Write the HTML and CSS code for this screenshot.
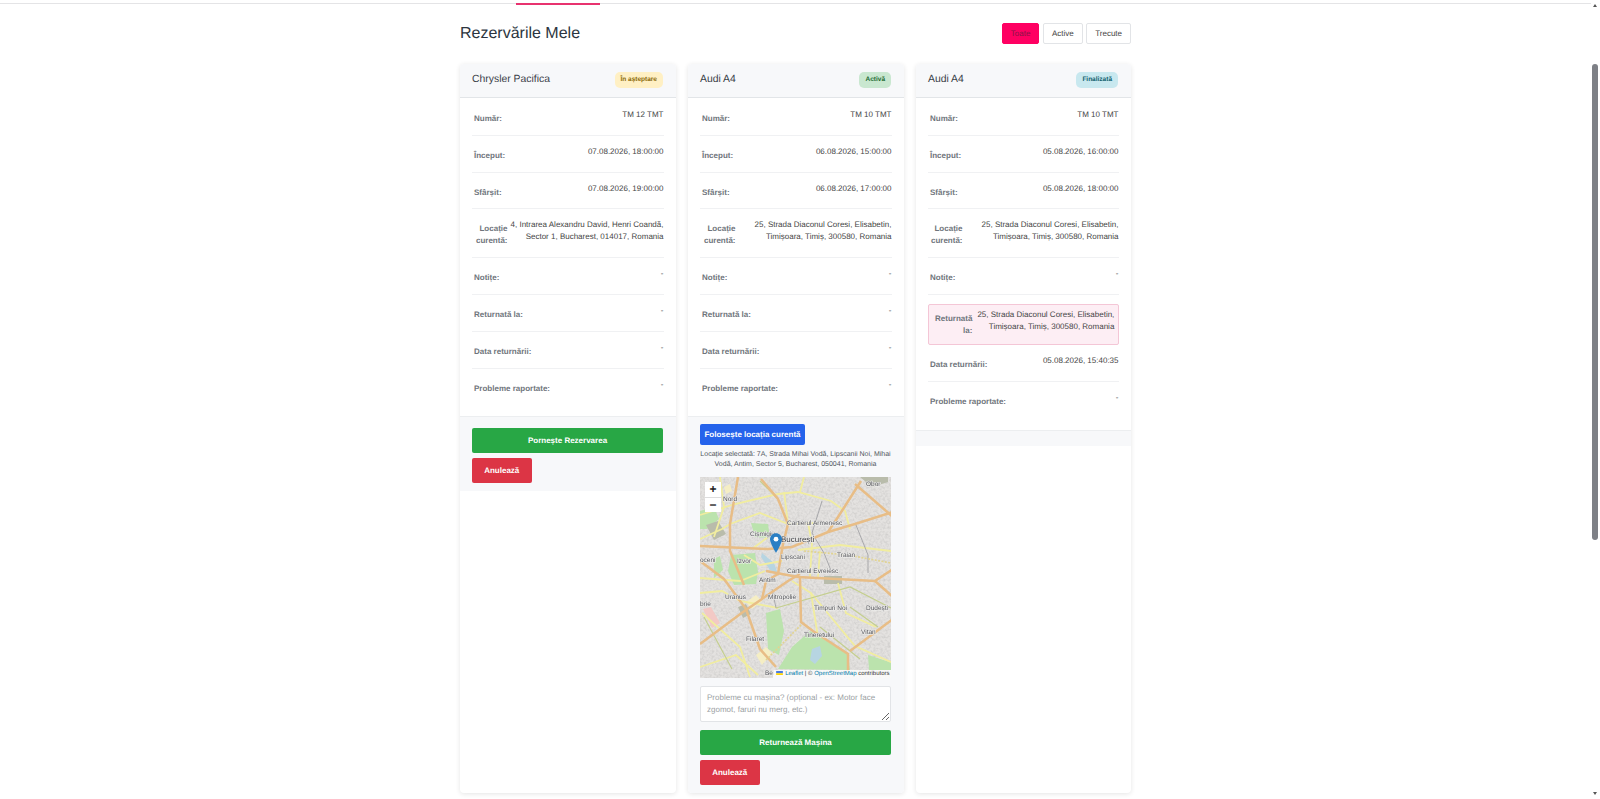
FILE: index.html
```html
<!DOCTYPE html>
<html lang="ro">
<head>
    <meta charset="UTF-8">
    <meta name="viewport" content="width=device-width, initial-scale=1.0">
    <title>Rezervările Mele</title>
    <link rel="stylesheet" href="styles.css">
</head>
<body>
    <div class="page">
        <main class="main">
            <!-- Bottom edge of the navbar, page is scrolled a little -->
            <div class="navbar-edge"><span class="nav-active"></span></div>

            <div class="wrap">
                <div class="top-row">
                    <h1 class="page-title">Rezervările Mele</h1>
                    <div class="filters">
                        <button class="filter filter-on">Toate</button>
                        <button class="filter">Active</button>
                        <button class="filter">Trecute</button>
                    </div>
                </div>

                <div class="cards">
                    <!-- Card 1 -->
                    <section class="card">
                        <div class="card-head">
                            <span class="car-name">Chrysler Pacifica</span>
                            <span class="badge badge-wait">În așteptare</span>
                        </div>
                        <div class="card-body">
                            <div class="row"><span class="label">Număr:</span><span class="val">TM 12 TMT</span></div>
                            <div class="row"><span class="label">Început:</span><span class="val">07.08.2026, 18:00:00</span></div>
                            <div class="row"><span class="label">Sfârșit:</span><span class="val">07.08.2026, 19:00:00</span></div>
                            <div class="row"><span class="label">Locație curentă:</span><span class="val">4, Intrarea Alexandru David, Henri Coandă, Sector 1, Bucharest, 014017, Romania</span></div>
                            <div class="row"><span class="label">Notițe:</span><span class="val">-</span></div>
                            <div class="row"><span class="label">Returnată la:</span><span class="val">-</span></div>
                            <div class="row"><span class="label">Data returnării:</span><span class="val">-</span></div>
                            <div class="row"><span class="label">Probleme raportate:</span><span class="val">-</span></div>
                        </div>
                        <div class="card-foot foot-wait">
                            <button class="btn btn-green">Pornește Rezervarea</button>
                            <button class="btn btn-red">Anulează</button>
                        </div>
                    </section>

                    <!-- Card 2 -->
                    <section class="card">
                        <div class="card-head">
                            <span class="car-name">Audi A4</span>
                            <span class="badge badge-active">Activă</span>
                        </div>
                        <div class="card-body">
                            <div class="row"><span class="label">Număr:</span><span class="val">TM 10 TMT</span></div>
                            <div class="row"><span class="label">Început:</span><span class="val">06.08.2026, 15:00:00</span></div>
                            <div class="row"><span class="label">Sfârșit:</span><span class="val">06.08.2026, 17:00:00</span></div>
                            <div class="row"><span class="label">Locație curentă:</span><span class="val">25, Strada Diaconul Coresi, Elisabetin, Timișoara, Timiș, 300580, Romania</span></div>
                            <div class="row"><span class="label">Notițe:</span><span class="val">-</span></div>
                            <div class="row"><span class="label">Returnată la:</span><span class="val">-</span></div>
                            <div class="row"><span class="label">Data returnării:</span><span class="val">-</span></div>
                            <div class="row"><span class="label">Probleme raportate:</span><span class="val">-</span></div>
                        </div>
                        <div class="card-foot foot-active">
                            <button class="btn btn-blue">Folosește locația curentă</button>
                            <p class="picked">Locație selectată: 7A, Strada Mihai Vodă, Lipscanii Noi, Mihai Vodă, Antim, Sector 5, Bucharest, 050041, Romania</p>

                            <div class="map">
                                <svg class="map-svg" viewBox="0 0 191 201" preserveAspectRatio="none">
                                    <defs>
                                        <filter id="mottle" x="0" y="0" width="100%" height="100%">
                                            <feTurbulence type="fractalNoise" baseFrequency=".42" numOctaves="2" seed="7"/>
                                            <feColorMatrix values="0 0 0 0 .62  0 0 0 0 .61  0 0 0 0 .6  1.9 0 0 0 -.72"/>
                                        </filter>
                                        <filter id="soft"><feGaussianBlur stdDeviation=".4"/></filter>
                                    </defs>
                                    <rect class="ground" width="191" height="201"/>
                                    <rect width="191" height="201" filter="url(#mottle)"/>
                                    <g filter="url(#soft)">
                                        <!-- parks and areas -->
                                        <path class="park" d="M51 46l17 1 2 14-15-1z"/>
                                        <path class="park" d="M31 78l24-2 3 19-2 12-22 1-6-14z"/>
                                        <path class="park" d="M66 136l14-4 4 22-5 24-11-6z"/>
                                        <path class="park" d="M78 192l14-22 18-16 20 12 18 10 2 17z"/>
                                        <path class="park" d="M168 178l25 8v7h-24z"/>
                                        <path class="park" d="M0 34l14-4 5 12-12 10H0z"/>
                                        <path class="park" d="M14 82l6-3 3 14-9 8z"/>
                                        <path class="water" d="M112 172l8-3 2 10-7 8-5-4z"/>
                                        <path class="water" d="M62 76l12 10 4 11-8-4-9-13z"/>
                                        <path class="pink" d="M3 132l8-2 9 16-8 5z"/>
                                        <path class="sand" d="M46 125l10-7 6 6-10 8z"/>
                                        <path class="sand" d="M56 178l10-8 6 6-10 12z"/>
                                        <path class="sand" d="M24 10l6-3 2 7-6 3z"/>
                                        <path class="dark" d="M6 48l12-4 8 13-12 6z"/>
                                        <path class="dark" d="M124 99h18v8h-18z"/>
                                        <path class="dark" d="M38 130l8-3 5 10-8 4z"/>
                                        <path class="dark" d="M160 0h28v5l-16 5z"/>
                                        <!-- yellow streets -->
                                        <path class="y" d="M0 38L35 27 78 17 98 15 131 24 145 34 150 52"/>
                                        <path class="y" d="M0 62L22 52 30 47 60 36 88 47"/>
                                        <path class="y" d="M84 15L88 47 118 46"/>
                                        <path class="y" d="M98 73L140 68 191 74"/>
                                        <path class="y" d="M0 101L40 104 65 94"/>
                                        <path class="y" d="M111 116L155 169 193 186"/>
                                        <path class="y" d="M92 104L111 116 118 160"/>
                                        <path class="y" d="M2 136L40 170 50 200"/>
                                        <path class="y" d="M44 78L60 88 82 84"/>
                                        <path class="y" d="M120 74L118 100"/>
                                        <path class="y" d="M0 116L22 114 40 124 78 131"/>
                                        <path class="y" d="M20 0L24 30 14 60"/>
                                        <path class="y" d="M100 15L104 0"/>
                                        <path class="y" d="M108 46L112 66 110 100"/>
                                        <path class="y" d="M138 106L146 136 176 150"/>
                                        <path class="y" d="M68 60L52 72"/>
                                        <path class="y" d="M0 190L36 178 58 198"/>
                                        <path class="g" d="M76 131L150 110 191 131"/>
                                        <path class="g" d="M120 150L160 182"/>
                                        <path class="g" d="M60 4L78 22"/>
                                        <path class="g" d="M150 130L178 150"/>
                                        <path class="g" d="M4 140L32 192"/>
                                        <path class="gr" d="M122 24L112 56 124 76 132 96"/>
                                        <path class="gr" d="M156 48L168 78 168 96"/>
                                        <path class="gr" d="M76 131L72 112"/>
                                        <!-- orange main roads -->
                                        <path class="o" d="M0 69L68 72 92 70 128 55 155 47 193 35"/>
                                        <path class="o" d="M38 0L30 47 30 74 44 108"/>
                                        <path class="o" d="M61 2L78 22 88 47 83 67 78 97 66 104 62 122"/>
                                        <path class="o" d="M161 4L138 40 128 55"/>
                                        <path class="o" d="M155 7L193 40"/>
                                        <path class="o" d="M66 94L98 100 175 104 193 92"/>
                                        <path class="o" d="M0 167L43 135 88 104 100 97"/>
                                        <path class="o" d="M100 100L101 145 113 154 148 177 148 195"/>
                                        <path class="o" d="M150 174L193 142"/>
                                        <path class="o" d="M0 84L24 102 46 132 60 172 76 190"/>
                                        <path class="o" d="M175 104L193 120"/>
                                        <path class="d" d="M101 148L66 183"/>
                                        <path class="d" d="M104 74L148 78 191 86"/>
                                        <!-- place names -->
                                        <text class="place" x="23" y="24">Nord</text>
                                        <text class="place" x="166" y="9">Obor</text>
                                        <text class="place" x="87" y="48">Cartierul Armenesc</text>
                                        <text class="place" x="50" y="59">Cișmigiu</text>
                                        <text class="place place-big" x="81" y="65">București</text>
                                        <text class="place" x="81" y="82">Lipscani</text>
                                        <text class="place" x="137" y="80">Traian</text>
                                        <text class="place" x="0" y="85">oceni</text>
                                        <text class="place" x="37" y="86">Izvor</text>
                                        <text class="place" x="87" y="96">Cartierul Evreiesc</text>
                                        <text class="place" x="59" y="105">Antim</text>
                                        <text class="place" x="25" y="122">Uranus</text>
                                        <text class="place" x="68" y="122">Mitropolie</text>
                                        <text class="place" x="114" y="133">Timpuri Noi</text>
                                        <text class="place" x="166" y="133">Dudești</text>
                                        <text class="place" x="0" y="129">brie</text>
                                        <text class="place" x="161" y="157">Vitan</text>
                                        <text class="place" x="104" y="160">Tineretului</text>
                                        <text class="place" x="46" y="164">Filaret</text>
                                        <text class="place" x="65" y="198">Bel</text>
                                    </g>
                                </svg>

                                <div class="zoom-ctrl">
                                    <span class="zoom-btn">+</span>
                                    <span class="zoom-btn">−</span>
                                </div>

                                <svg class="pin" viewBox="0 0 25 41">
                                    <path d="M12.5 0C5.6 0 0 5.6 0 12.5 0 21 12.5 41 12.5 41S25 21 25 12.5C25 5.6 19.4 0 12.5 0z" fill="#2a7fc4"/>
                                    <circle cx="12.5" cy="12.5" r="5" fill="#fff"/>
                                </svg>

                                <div class="attrib">
                                    <svg class="flag" viewBox="0 0 12 8"><rect width="12" height="4" fill="#4c7be1"/><rect y="4" width="12" height="4" fill="#ffd500"/></svg>
                                    <a>Leaflet</a> | © <a>OpenStreetMap</a> contributors
                                </div>
                            </div>

                            <textarea class="issue" placeholder="Probleme cu mașina? (opțional - ex: Motor face zgomot, faruri nu merg, etc.)"></textarea>
                            <button class="btn btn-green">Returnează Mașina</button>
                            <button class="btn btn-red">Anulează</button>
                        </div>
                    </section>

                    <!-- Card 3 -->
                    <section class="card">
                        <div class="card-head">
                            <span class="car-name">Audi A4</span>
                            <span class="badge badge-done">Finalizată</span>
                        </div>
                        <div class="card-body">
                            <div class="row"><span class="label">Număr:</span><span class="val">TM 10 TMT</span></div>
                            <div class="row"><span class="label">Început:</span><span class="val">05.08.2026, 16:00:00</span></div>
                            <div class="row"><span class="label">Sfârșit:</span><span class="val">05.08.2026, 18:00:00</span></div>
                            <div class="row"><span class="label">Locație curentă:</span><span class="val">25, Strada Diaconul Coresi, Elisabetin, Timișoara, Timiș, 300580, Romania</span></div>
                            <div class="row"><span class="label">Notițe:</span><span class="val">-</span></div>
                            <div class="row row-alert"><span class="label">Returnată la:</span><span class="val">25, Strada Diaconul Coresi, Elisabetin, Timișoara, Timiș, 300580, Romania</span></div>
                            <div class="row"><span class="label">Data returnării:</span><span class="val">05.08.2026, 15:40:35</span></div>
                            <div class="row"><span class="label">Probleme raportate:</span><span class="val">-</span></div>
                        </div>
                        <div class="card-foot foot-done"></div>
                    </section>
                </div>
            </div>
        </main>

        <!-- Scrollbar of the reference window -->
        <div class="scrollbar">
            <span class="arrow-up"></span>
            <span class="thumb"></span>
            <span class="arrow-down"></span>
        </div>
    </div>
</body>
</html>
```

FILE: styles.css
```css
* {
    box-sizing: border-box;
    text-rendering: geometricPrecision;
}

body {
    margin: 0;
    font-family: "Liberation Sans", Arial, sans-serif;
    font-size: 8px;
    line-height: 12px;
    color: #444;
    background: #fff;
}

.page {
    display: flex;
    height: 799px;
    overflow: hidden;
}

.main {
    flex: 1;
    min-width: 0;
}

.navbar-edge {
    height: 4px;
    border-bottom: 1px solid #e4e4e6;
    padding-left: 516px;
}

.nav-active {
    display: block;
    width: 84px;
    height: 5px;
    border-bottom: 2px solid #e8326f;
}

.wrap {
    width: 671px;
    margin: 0 auto;
}

.top-row {
    display: flex;
    justify-content: space-between;
    align-items: center;
    height: 60px;
    padding-bottom: 1px;
}

.page-title {
    margin: 0;
    font-size: 16px;
    font-weight: 400;
    line-height: 20px;
    color: #2c3540;
}

.filters {
    display: flex;
    gap: 3.5px;
}

.filter {
    height: 21px;
    padding: 0 8px;
    font: 8px "Liberation Sans", Arial, sans-serif;
    color: #444;
    background: #fff;
    border: 1px solid #e2e4e7;
    border-radius: 2px;
}

.filter-on {
    background: #ff0062;
    border-color: #ff0062;
    color: #8a1448;
}

.cards {
    display: grid;
    grid-template-columns: 216px 216px 215px;
    column-gap: 12px;
    height: 729px;
}

.card {
    display: flex;
    flex-direction: column;
    background: #fff;
    border-radius: 4px;
    box-shadow: 0 1px 5px rgba(0, 0, 0, 0.11);
    overflow: hidden;
}

.card-head {
    display: flex;
    justify-content: space-between;
    align-items: center;
    height: 33.5px;
    padding: 0 13px 0 12px;
    background: #f7f8fa;
    border-bottom: 1px solid #e2e5e8;
}

.car-name {
    font-size: 10.4px;
    color: #3a4048;
}

.badge {
    padding: 2px 6px;
    font-size: 6.5px;
    font-weight: 700;
    border-radius: 5px;
}

.badge-wait {
    background: #fff0c4;
    color: #8a6a08;
}

.badge-active {
    background: #c9e7d0;
    color: #1d6b33;
}

.badge-done {
    background: #c8e8ef;
    color: #105e6e;
}

.card-body {
    padding: 1.5px 12.5px 12px 12px;
}

.row {
    display: flex;
    justify-content: space-between;
    gap: 3px;
    padding: 10px 0 9.8px;
    border-bottom: 1px solid #f0f1f3;
}

.row:last-child {
    border-bottom: none;
}

.label {
    margin-top: 4px;
    padding-left: 2px;
    font-weight: 700;
    text-align: right;
    color: #6f757c;
}

.val {
    flex-shrink: 0;
    max-width: 153px;
    text-align: right;
}

.row-alert {
    margin-top: 9px;
    padding: 4px 5px 7px 6px;
    background: #fdeef4;
    border: 1px solid #f4c6d6;
    border-radius: 2px;
}

.row-alert .label {
    padding-left: 0;
}

.row-alert .val {
    max-width: 139px;
}

.card-foot {
    flex: 1;
    padding: 0 13px 8px 12px;
    background: #f7f8fa;
    border-top: 1px solid #eceef0;
}

.foot-wait {
    flex: none;
    height: 75px;
    padding-top: 11px;
}

.foot-active {
    padding-top: 7px;
}

.foot-done {
    flex: none;
    height: 16px;
}

.btn {
    display: block;
    width: 100%;
    height: 24.5px;
    padding: 0;
    font: 700 8px "Liberation Sans", Arial, sans-serif;
    color: #fff;
    border: none;
    border-radius: 2px;
}

.btn + .btn {
    margin-top: 5.5px;
}

.btn-green {
    background: #28a745;
}

.btn-red {
    width: 59.5px;
    background: #dc3545;
}

.btn-blue {
    width: 105px;
    height: 21px;
    background: #2563eb;
}

.picked {
    margin: 5px 0 7px;
    font-size: 7px;
    line-height: 10px;
    text-align: center;
    color: #50565c;
}

.map {
    position: relative;
    height: 201px;
    overflow: hidden;
}

.map-svg {
    display: block;
    width: 100%;
    height: 100%;
}

.ground { fill: #e4e2e0; }
.park { fill: #bbe3ad; }
.water { fill: #b7d5e2; }
.pink { fill: #f3c9c5; }
.sand { fill: #f5eec4; }
.dark { fill: #b9bcab; }

.y, .g, .gr, .o, .d {
    fill: none;
}

.y { stroke: #f1ed9f; stroke-width: 1.8; }
.g { stroke: #c4cf8e; stroke-width: 1.2; }
.gr { stroke: #a8a8ab; stroke-width: 1; }
.o { stroke: #e8bd86; stroke-width: 2.5; }
.d { stroke: #e2d48f; stroke-width: 1.6; stroke-dasharray: 2 1.4; }

.place {
    font-size: 6.5px;
    fill: #55555a;
    paint-order: stroke;
    stroke: #eeeeec;
    stroke-width: 1.2px;
}

.place-big {
    font-size: 8px;
    fill: #3d3d42;
}

.zoom-ctrl {
    position: absolute;
    top: 5px;
    left: 5px;
    display: flex;
    flex-direction: column;
    width: 16px;
    border-radius: 2px;
}

.zoom-btn {
    height: 15px;
    font: 700 12px/15px "Liberation Sans", Arial, sans-serif;
    text-align: center;
    color: #222;
    background: #fff;
}

.zoom-btn + .zoom-btn {
    border-top: 1px solid #ddd;
}

.pin {
    position: absolute;
    left: 70px;
    top: 55.5px;
    width: 12px;
    height: 20px;
}

.attrib {
    position: absolute;
    right: 0;
    bottom: 0;
    padding: 0 1.5px 0 3px;
    font-size: 6px;
    line-height: 8px;
    color: #333;
    background: rgba(255, 255, 255, 0.8);
}

.attrib a {
    color: #0078a8;
}

.flag {
    width: 7px;
    height: 4.5px;
}

.issue {
    display: block;
    width: 100%;
    height: 36px;
    margin: 8px 0;
    padding: 4.5px 6px;
    font: 8px/12px "Liberation Sans", Arial, sans-serif;
    background: #fff;
    border: 1px solid #e2e4e7;
    border-radius: 2px;
    outline: none;
}

.issue::placeholder {
    color: #9b9fa4;
}

.scrollbar {
    position: relative;
    width: 9px;
    flex: none;
}

.thumb {
    position: absolute;
    top: 64px;
    left: 1px;
    width: 6px;
    height: 476px;
    background: #7e8086;
    border-radius: 3px;
}

.arrow-up,
.arrow-down {
    position: absolute;
    left: 1.5px;
    width: 0;
    height: 0;
    border-left: 2.5px solid transparent;
    border-right: 2.5px solid transparent;
}

.arrow-up {
    top: 4px;
    border-bottom: 3px solid #555;
}

.arrow-down {
    bottom: 4px;
    border-top: 3px solid #555;
}
```
